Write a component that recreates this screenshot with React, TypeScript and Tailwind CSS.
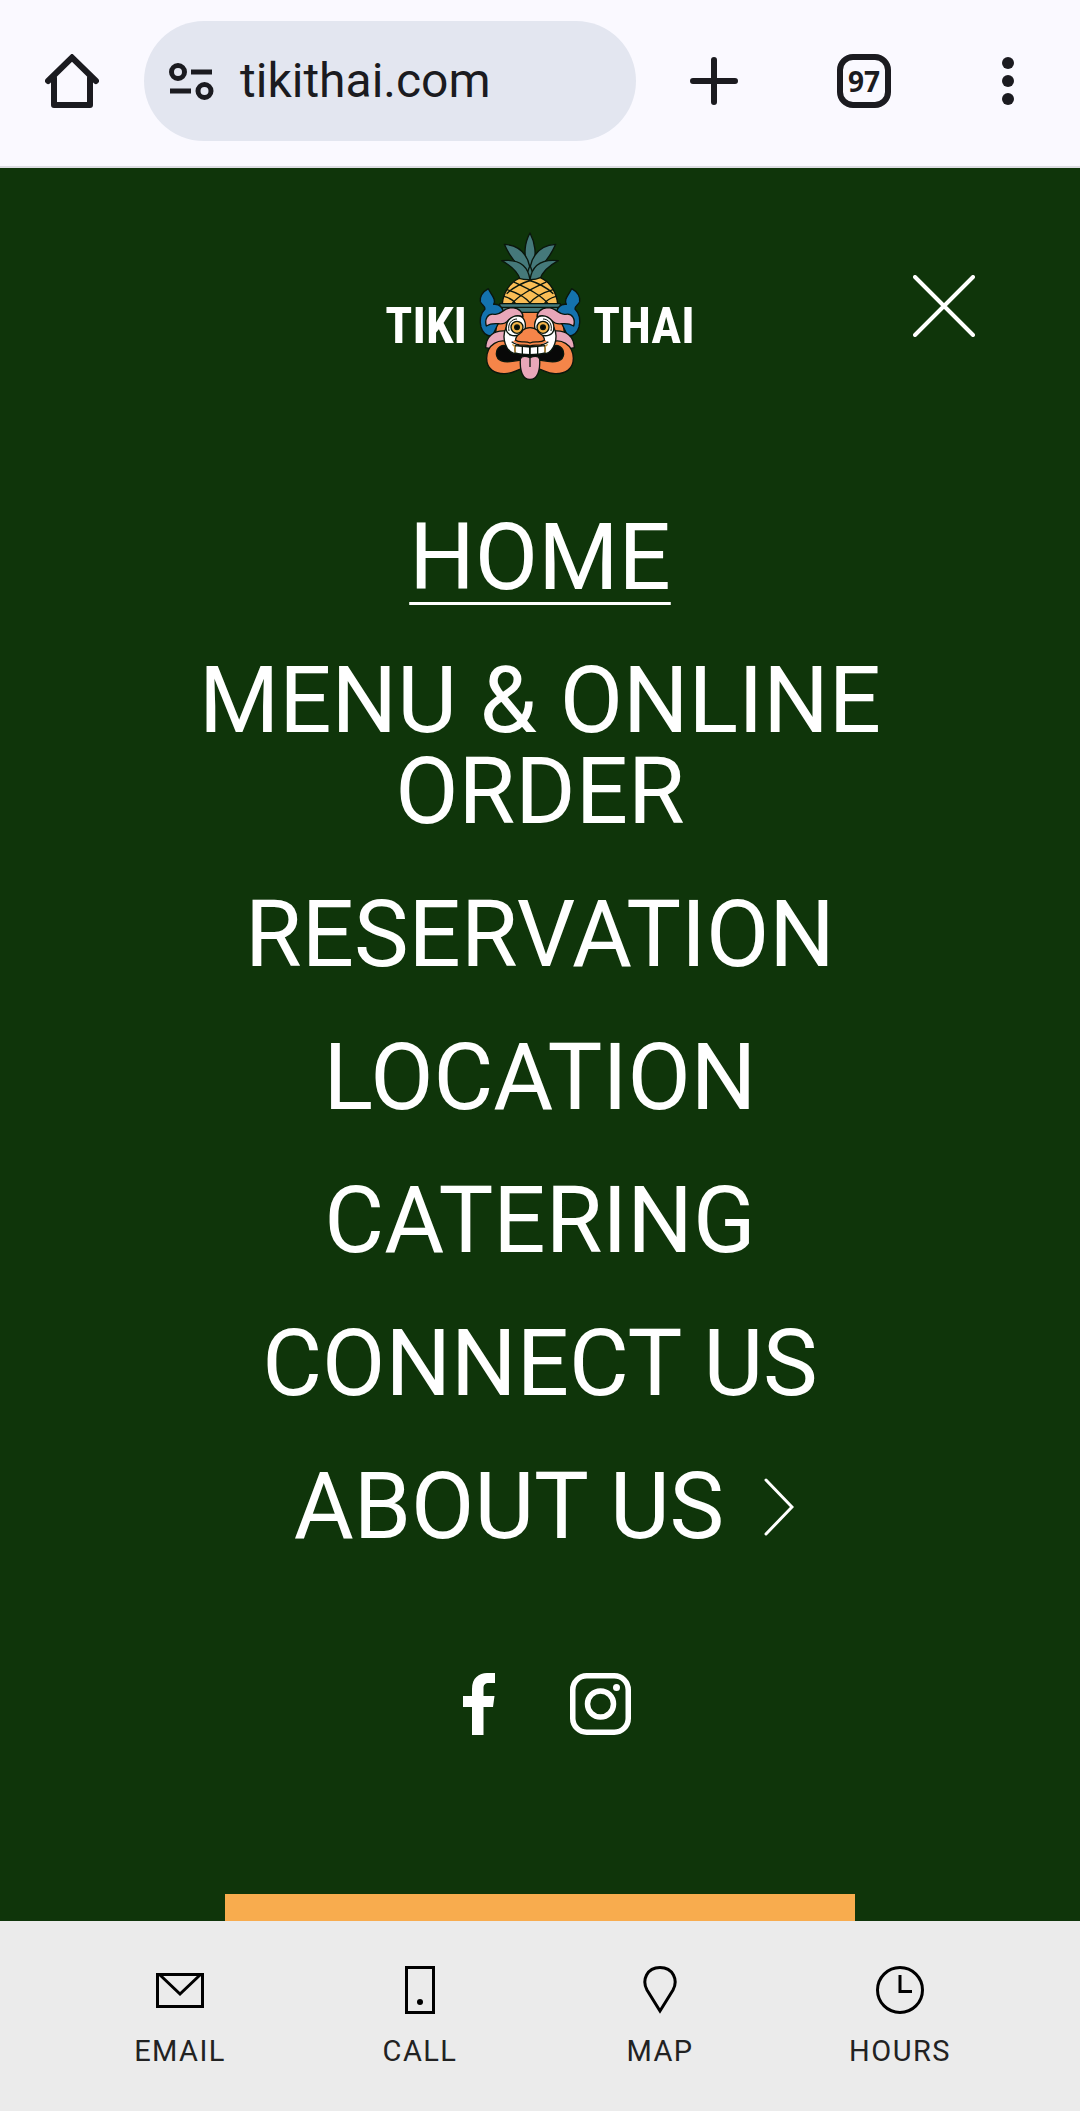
import React from "react";

function HomeIcon() {
  return (
    <svg viewBox="0 0 54 54" className="h-[54px] w-[54px]" fill="none" stroke="currentColor" strokeWidth="6" strokeLinecap="round" strokeLinejoin="round" aria-hidden="true">
      <path d="M9 24V51H45V24" />
      <path d="M3 27L27 3.500L51 27" strokeLinejoin="miter" />
    </svg>
  );
}

function SiteSettingsIcon() {
  return (
    <svg viewBox="0 0 46 40" className="h-10 w-[46px] shrink-0" fill="none" stroke="currentColor" strokeWidth="5" aria-hidden="true">
      <circle cx="10" cy="11" r="6.500" />
      <path d="M23 11H44M2 30H23" />
      <circle cx="36.500" cy="30" r="6.500" />
    </svg>
  );
}

function FaceSide() {
  return (
    <g>
      <path fill="#1472ae" d="M50 191C34 200 24 214 26 230C29 240 42 244 40 252C28 264 23 285 28 306C33 324 44 334 62 333L96 262C92 246 84 236 66 238C74 222 60 212 50 191Z" />
      <path fill="#e8a7b9" d="M42 368C43 335 66 314 104 318L112 350L60 372Z" />
      <path fill="#f58549" d="M112 352C84 340 46 356 45 400C45 432 68 447 100 446C126 445 134 434 152 431H176V352Z" />
      <path fill="#080808" d="M112 366C92 355 74 366 74 387C75 408 98 413 122 409C142 405 158 404 176 404V362Z" />
      <path fill="#ffffff" d="M103 308C88 340 104 380 128 386L140 384V330Z" />
      <path fill="#ffffff" d="M130 362L176 366V389C160 389 144 388 130 384Z" />
      <path d="M152 364V387" />
      <path fill="#ffffff" d="M104 316C100 288 118 272 138 272C158 274 164 292 160 314L144 330C124 336 108 330 104 316Z" />
      <path fill="none" strokeWidth="3" d="M112 318C107 296 120 282 136 282" />
      <circle cx="136" cy="307" r="18" fill="#f2b34a" />
      <circle cx="136" cy="307" r="7" fill="#080808" />
      <path fill="#e8a7b9" d="M44 303C38 282 48 264 68 268C88 272 94 248 122 248C144 249 154 264 154 276C134 266 118 276 106 290C92 306 70 286 44 303Z" />
      <path fill="none" stroke="#c9953b" d="M122 358C132 362 132 376 129 382" />
    </g>
  );
}

function TikiMask() {
  return (
    <svg viewBox="16 18 318 450" className="h-[150px] w-[106px]" stroke="#0a160c" strokeWidth="4" strokeLinejoin="round" aria-hidden="true">
      <g fill="#45797a">
        <path stroke="none" d="M160 112H190L184 162H166Z" />
        <path d="M175 24C158 55 156 90 167 114L175 124L184 114C195 90 191 55 175 24Z" />
        <path d="M98 58C134 60 164 80 174 124L168 140C138 126 116 98 98 58Z" />
        <path d="M252 58C216 60 186 80 176 124L182 140C212 126 234 98 252 58Z" />
        <path d="M90 107C134 102 168 116 175 164H146C138 140 118 122 90 107Z" />
        <path d="M260 107C216 102 182 116 175 164H204C212 140 232 122 260 107Z" />
      </g>
      <path fill="#fabd55" d="M92 237C94 206 112 174 142 160C160 166 190 166 206 158C238 172 255 206 258 237Z" />
      <g fill="none">
        <path d="M126 171C166 190 206 208 230 237M106 194C140 204 164 218 178 237M97 214C112 218 126 226 133 237M170 165C200 174 226 188 245 206" />
        <path d="M224 171C184 190 144 208 120 237M244 194C210 204 186 218 172 237M253 214C238 218 224 226 217 237M180 165C150 174 124 188 105 206" />
      </g>
      <path fill="#f58549" d="M78 262H272L280 345H70Z" />
      <path fill="#45797a" d="M92 246H258V262H92Z" />
      <path fill="#45797a" d="M84 236H266V247H84Z" />
      <FaceSide />
      <g transform="translate(350 0) scale(-1 1)">
        <FaceSide />
      </g>
      <path d="M175 364V388" />
      <path fill="#f58549" stroke="none" d="M124 350L140 334H210L226 350L200 362H150Z" />
      <path fill="#f58549" d="M132 346C130 328 150 328 153 316C164 305 186 305 197 316C200 328 220 328 218 346C206 356 190 346 175 354C160 346 144 356 132 346Z" />
      <path fill="none" d="M120 350C142 368 160 356 175 363C190 356 208 368 230 350" />
      <path fill="#e8a7b9" d="M146 402C150 390 166 394 175 398C184 394 200 390 204 402C206 436 198 463 175 463C152 463 144 436 146 402Z" />
      <path d="M175 398V426" />
    </svg>
  );
}

function Logo() {
  return (
    <a href="#home" aria-label="Tiki Thai" className="flex items-center gap-[10px] font-['Roboto_Condensed','Liberation_Sans_Narrow','Roboto',sans-serif] text-[50px] leading-none font-bold">
      <span className="pt-10">TIKI</span>
      <TikiMask />
      <span className="pt-10">THAI</span>
    </a>
  );
}

const links = ["HOME", "MENU & ONLINE ORDER", "RESERVATION", "LOCATION", "CATERING", "CONNECT US"];

const actions = [
  {
    label: "EMAIL",
    icon: (
      <>
        <path d="M1.500 8.500H46.500V40.500H1.500Z" />
        <path d="M4 9L24 28L44 9" />
      </>
    ),
  },
  {
    label: "CALL",
    icon: (
      <>
        <path d="M10.500 1.500H37.500V46.500H10.500Z" />
        <circle cx="24" cy="36" r="3" fill="currentColor" stroke="none" />
      </>
    ),
  },
  {
    label: "MAP",
    icon: <path d="M24 45L11 24C5.500 14 11 1.500 24 1.500S42.500 14 37 24Z" />,
  },
  {
    label: "HOURS",
    icon: (
      <>
        <circle cx="24" cy="24" r="22.500" />
        <path d="M24 9V25.500H36" />
      </>
    ),
  },
];

export default function App() {
  return (
    <div className="flex h-screen flex-col overflow-hidden bg-[#0f350a] font-['Roboto',sans-serif] text-white">
      <header className="flex shrink-0 items-center border-b-2 border-[#dcdce2] bg-[#faf9ff] pt-[21px] pb-[25px] text-[#1b1b20]">
        <button aria-label="Home" className="flex w-36 justify-center">
          <HomeIcon />
        </button>
        <button className="flex h-[120px] flex-1 items-center gap-[26px] rounded-full bg-[#e3e6f0] px-6 text-left text-[48px]">
          <SiteSettingsIcon />
          <span>tikithai.com</span>
        </button>
        <button aria-label="New tab" className="flex w-[156px] justify-center">
          <svg viewBox="0 0 48 48" className="h-12 w-12" stroke="currentColor" strokeWidth="6" strokeLinecap="round" aria-hidden="true">
            <path d="M24 3V45M3 24H45" />
          </svg>
        </button>
        <button aria-label="97 open tabs" className="flex w-36 justify-center">
          <span className="flex h-[54px] w-[54px] items-center justify-center rounded-2xl border-6 border-current font-['Noto_Sans',sans-serif] text-[28px] leading-none font-bold">97</span>
        </button>
        <button aria-label="More options" className="flex w-36 justify-center">
          <svg viewBox="0 0 12 48" className="h-12 w-3" fill="currentColor" aria-hidden="true">
            <circle cx="6" cy="6" r="6" />
            <circle cx="6" cy="24" r="6" />
            <circle cx="6" cy="42" r="6" />
          </svg>
        </button>
      </header>

      <main className="flex min-h-0 flex-1 flex-col items-center overflow-hidden">
        <div className="grid w-full shrink-0 grid-cols-[1fr_auto_1fr] items-center px-[105px] pt-[63px]">
          <span />
          <Logo />
          <button aria-label="Close menu" className="justify-self-end">
            <svg viewBox="0 0 62 62" className="h-[62px] w-[62px]" stroke="currentColor" strokeWidth="4" strokeLinecap="round" aria-hidden="true">
              <path d="M2 2L60 60M60 2L2 60" />
            </svg>
          </button>
        </div>

        <nav className="w-full shrink-0 px-[10%] pt-[131px]">
          <ul className="flex flex-col gap-[52px] text-center text-[92px] leading-[91px]">
            {links.map((label, i) => (
              <li key={label}>
                <a href="#" className={i === 0 ? "underline decoration-[3px] underline-offset-[13px]" : ""}>
                  {label}
                </a>
              </li>
            ))}
            <li>
              <a href="#" className="flex items-center justify-center gap-10 pl-2">
                ABOUT US
                <svg viewBox="0 0 30 58" className="h-[58px] w-[30px]" fill="none" stroke="currentColor" strokeWidth="3" strokeLinecap="round" aria-hidden="true">
                  <path d="M2 2L28 29L2 56" />
                </svg>
              </a>
            </li>
          </ul>
        </nav>

        <div className="flex shrink-0 gap-[60px] pt-[121px]">
          <a href="#facebook" aria-label="Facebook">
            <svg viewBox="0 0 61 62" className="h-[62px] w-[61px]" fill="currentColor" aria-hidden="true">
              <path d="M23 62V34H14V23H23V16C23 5 30 0 38 0H46V10H40C36 10 34.500 12 34.500 15V23H45.500L44 34H34.500V62Z" />
            </svg>
          </a>
          <a href="#instagram" aria-label="Instagram">
            <svg viewBox="0 0 61 62" className="h-[62px] w-[61px]" fill="none" stroke="currentColor" strokeWidth="5.500" aria-hidden="true">
              <rect x="2.750" y="2.750" width="55.500" height="56.500" rx="14" />
              <circle cx="30.500" cy="31" r="13" />
              <circle cx="46.500" cy="14.500" r="3.500" fill="currentColor" stroke="none" />
            </svg>
          </a>
        </div>

        <a href="#order" aria-label="Order online" className="mt-[159px] block h-[120px] w-[630px] max-w-full shrink-0 bg-[#f8ac4e]" />
      </main>

      <footer className="grid shrink-0 grid-cols-4 bg-[#ebebeb] px-[60px] pt-[45px] pb-[42px] text-[#222222]">
        {actions.map((a) => (
          <a key={a.label} href="#" className="flex flex-col items-center gap-5 text-[29px] leading-[35px] tracking-wider">
            <svg viewBox="0 0 48 48" className="h-12 w-12 text-black" fill="none" stroke="currentColor" strokeWidth="3" aria-hidden="true">
              {a.icon}
            </svg>
            {a.label}
          </a>
        ))}
      </footer>
    </div>
  );
}
